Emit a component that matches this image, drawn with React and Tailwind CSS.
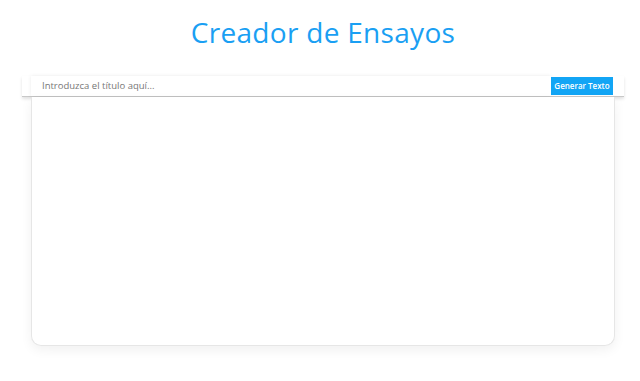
import React, { useState } from 'react';

const App = () => {
    const [title, setTitle] = useState('');

    return (
        <div className="w-[640px] h-[381px] bg-white pl-[6px] flex flex-col items-center" style={{ fontFamily: '"Open Sans", sans-serif' }}>
            <h1 className="mt-[14px] text-[28px] leading-[36px] text-[#1a9ff3] tracking-[0.3px]">
                Creador de Ensayos
            </h1>

            <div className="mt-[26px] w-[602px] flex flex-col">
                <div className="flex items-stretch h-[21px] pl-[9px] border-b border-[#c8c8c8] shadow-[0_2px_3px_rgba(0,0,0,0.12)]">
                    <input
                        value={title}
                        onChange={(e) => setTitle(e.target.value)}
                        placeholder="Introduzca el título aquí..."
                        className="flex-1 bg-white px-[11px] text-[9.5px] text-[#555] placeholder-[#777] outline-none shadow-[0_0_4px_rgba(0,0,0,0.08)]"
                    />
                    <button className="w-[62px] mt-[1px] mb-[1px] bg-[#12a5f5] text-white text-[8px] font-semibold shrink-0 whitespace-nowrap">
                        Generar Texto
                    </button>
                    <div className="w-[11px] shrink-0"></div>
                </div>
                <div className="mx-[9px] h-[249px] bg-white border border-t-0 border-[#e6e6e6] rounded-b-[10px] shadow-[0_4px_12px_rgba(0,0,0,0.06)]"></div>
            </div>
        </div>
    );
};

export default App;
